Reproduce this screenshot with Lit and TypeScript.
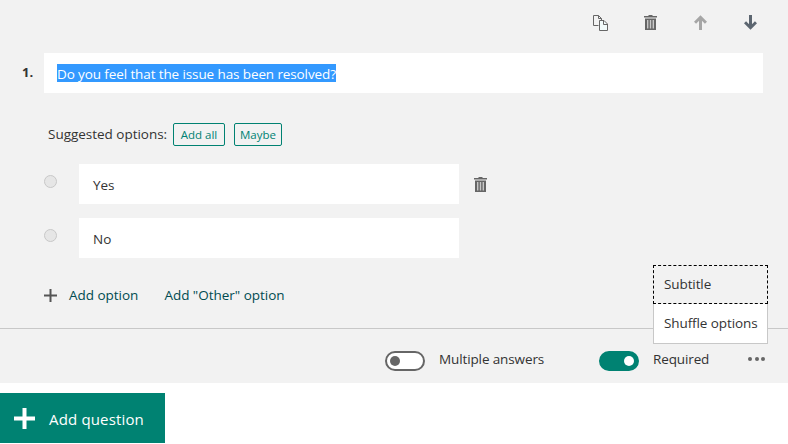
import { LitElement, html, css, svg } from "lit";
import { customElement } from "lit/decorators.js";

const trash = (c: string) => svg`<svg class="ic" width="13" height="15" viewBox="0 0 13 15"><path d="M4.5 0h4v1h4.5v1.6H0V1h4.5z" fill="${c}"/><path d="M1 3.5h11V15H1z" fill="${c}"/><path d="M3 5h1.4v8.4H3zM5.8 5h1.4v8.4H5.8zM8.6 5H10v8.4H8.6z" fill="#f2f2f2" opacity=".7"/></svg>`;

@customElement("app-root")
export class AppRoot extends LitElement {
  static styles = css`
    :host { display: block; width: 788px; height: 444px; background: #fff; overflow: hidden;
      font-family: "Open Sans", "Noto Sans", sans-serif; font-size: 13.5px; letter-spacing: -0.02px; color: #333; }
    .card { position: relative; height: 383px; background: #f2f2f2; display: flex; flex-direction: column; box-sizing: border-box; }
    .tools { height: 53px; display: flex; align-items: flex-start; justify-content: flex-end; padding: 15px 30px 0 0; gap: 35px; box-sizing: border-box; }
    .tool { width: 15px; height: 15px; display: flex; align-items: center; justify-content: center; }
    .qrow { display: flex; padding: 0 25px 0 22px; align-items: flex-start; }
    .num { width: 22px; font-weight: 700; font-size: 13px; line-height: 38px; color: #333; letter-spacing: 0; }
    .title { flex: 1; height: 40px; background: #fff; padding: 0 0 0 13px; display: flex; align-items: center; box-sizing: border-box; }
    .sel { display: block; height: 18px; background: #3399ff; color: #fff; font-size: 13.5px; letter-spacing: -0.11px; line-height: 20px; }
    .sugg { display: flex; align-items: center; padding: 30px 0 0 48px; height: 23px; box-sizing: content-box; }
    .sugg span.lab { position: relative; top: -1px; width: 125px; }
    .chip { border: 1px solid #008272; border-radius: 2px; color: #008272; font-size: 11.5px; letter-spacing: 0; height: 21px; line-height: 22px; box-sizing: content-box; text-align: center; }
    .chip.a { width: 50px; }
    .chip.b { width: 46px; margin-left: 9px; }
    .opts { display: flex; flex-direction: column; gap: 14px; padding: 18px 0 0 44px; }
    .opt { display: flex; align-items: flex-start; }
    .radio { width: 11px; height: 11px; border-radius: 50%; background: #e6e6e6; border: 1px solid #c8c8c8; margin: 11px 22px 0 0; }
    .input { width: 380px; height: 40px; background: #fff; padding: 2px 0 0 14px; box-sizing: border-box; display: flex; align-items: center; }
    .del { margin: 13px 0 0 15px; height: 15px; }
    .adds { display: flex; align-items: center; padding: 26px 0 0 44px; height: 22px; color: #004b50; box-sizing: content-box; }
    .adds svg { margin-right: 12px; }
    .adds .o { margin-right: 26px; }
    .rule { height: 1px; background: #c8c8c8; margin-top: 22px; }
    .foot { display: flex; align-items: center; height: 54px; padding: 10px 23px 0 385px; box-sizing: border-box; }
    .tog { width: 40px; height: 20px; border-radius: 10px; border: 2px solid #666; box-sizing: border-box; background: #fff; display: flex; align-items: center; padding: 0 3px; }
    .tog i { width: 10px; height: 10px; border-radius: 50%; background: #666; display: block; }
    .tog.on { background: #008272; border-color: #008272; justify-content: flex-end; }
    .tog.on i { background: #fff; }
    .tl { margin: -5px 0 0 14px; letter-spacing: -0.12px; }
    .tl.m { width: 160px; }
    .tl.r { width: 95px; }
    .more { display: flex; gap: 2.5px; margin-top: -5px; }
    .more i { width: 4px; height: 4px; border-radius: 50%; background: #666; display: block; }
    .menu { position: absolute; left: 653px; top: 265px; width: 115px; height: 79px; background: #fff; border: 1px solid #c8c8c8; border-top: 0; box-sizing: border-box; display: flex; flex-direction: column; }
    .menu div { height: 39px; display: flex; align-items: center; padding: 0 0 2px 11px; white-space: nowrap; margin: 0 -1px; box-sizing: border-box; letter-spacing: -0.1px; }
    .menu .f { background: #f2f2f2; outline: 1px dashed #000; outline-offset: -1px; }
    .addq { margin-top: 10px; width: 165px; height: 50px; background: #008272; color: #fff; display: flex; align-items: center; padding-left: 14px; box-sizing: border-box; font-size: 15px; letter-spacing: 0.16px; gap: 14px; }
    .addq span { position: relative; top: 1px; }
    .ic { display: block; }
    span, div { white-space: nowrap; }
  `;

  render() {
    return html`
      <div class="card">
        <div class="tools">
          <div class="tool"><svg class="ic" width="15" height="16" viewBox="0 0 15 16" fill="none" stroke="#666" stroke-width="1"><path d="M5.5 10.5H.5v-10h5l3 3v2"/><path d="M5.5 .5v3h3" /><path d="M6.5 5.5h4.5l3.5 3.5v6.5h-8z" fill="#f2fbfb"/><path d="M10.5 5.5v4h4"/></svg></div>
          <div class="tool">${trash("#666")}</div>
          <div class="tool"><svg class="ic" width="13" height="15" viewBox="0 0 13 15" fill="none" stroke="#a6a6a6" stroke-width="3"><path d="M6.5 15V2.5M1 7.8l5.5-5.5 5.5 5.5"/></svg></div>
          <div class="tool"><svg class="ic" width="13" height="15" viewBox="0 0 13 15" fill="none" stroke="#5c6670" stroke-width="3"><path d="M6.5 0v12.5M1 7.2l5.5 5.5 5.5-5.5"/></svg></div>
        </div>
        <div class="qrow">
          <div class="num">1.</div>
          <div class="title"><span class="sel">Do you feel that the issue has been resolved?</span></div>
        </div>
        <div class="sugg">
          <span class="lab">Suggested options:</span>
          <span class="chip a">Add all</span>
          <span class="chip b">Maybe</span>
        </div>
        <div class="opts">
          <div class="opt"><div class="radio"></div><div class="input">Yes</div><div class="del">${trash("#666")}</div></div>
          <div class="opt"><div class="radio"></div><div class="input">No</div></div>
        </div>
        <div class="adds">
          <svg class="ic" width="13" height="13" viewBox="0 0 13 13"><path d="M5.5 0h2v5.5H13v2H7.5V13h-2V7.5H0v-2h5.5z" fill="#555"/></svg>
          <span class="o">Add option</span>
          <span>Add "Other" option</span>
        </div>
        <div class="rule"></div>
        <div class="foot">
          <div class="tog"><i></i></div><span class="tl m">Multiple answers</span>
          <div class="tog on"><i></i></div><span class="tl r">Required</span>
          <div class="more"><i></i><i></i><i></i></div>
        </div>
        <div class="menu">
          <div class="f">Subtitle</div>
          <div class="s">Shuffle options</div>
        </div>
      </div>
      <div class="addq">
        <svg class="ic" width="21" height="21" viewBox="0 0 21 21"><path d="M8.5 0h4v8.5H21v4h-8.5V21h-4v-8.5H0v-4h8.5z" fill="#fff"/></svg>
        <span>Add question</span>
      </div>
    `;
  }
}
